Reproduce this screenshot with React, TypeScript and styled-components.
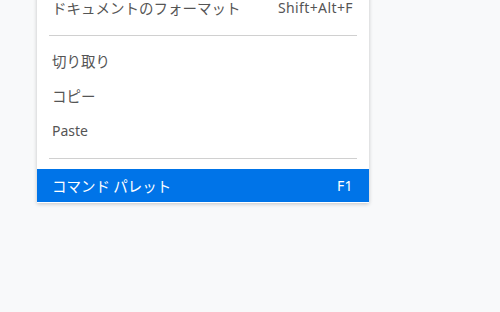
import React from 'react';
import styled, { createGlobalStyle } from 'styled-components';

const GlobalStyle = createGlobalStyle`
  html, body {
    margin: 0;
    padding: 0;
    background: #f8f9fa;
    overflow: hidden;
  }
  body {
    font-family: "Noto Sans", "Noto Sans CJK JP", sans-serif;
  }
`;

const Page = styled.div`
  width: 500px;
  height: 312px;
  padding-left: 37px;
  box-sizing: border-box;
`;

const Menu = styled.div`
  width: 332px;
  margin-top: -10px;
  background: #ffffff;
  padding-bottom: 1px;
  box-shadow: 0 1px 4px rgba(0, 0, 0, 0.22);
`;

const Item = styled.div<{ $active?: boolean; $h?: number }>`
  display: flex;
  align-items: center;
  justify-content: space-between;
  height: ${(p) => p.$h ?? 35}px;
  padding: 0 16px 0 15px;
  font-size: 14px;
  color: ${(p) => (p.$active ? '#ffffff' : '#555555')};
  background: ${(p) => (p.$active ? '#0074e8' : 'transparent')};
`;

const Label = styled.span<{ $jp?: boolean }>`
  font-family: ${(p) => (p.$jp ? '"Noto Sans CJK JP", sans-serif' : '"Noto Sans", sans-serif')};
  font-size: ${(p) => (p.$jp ? 14.5 : 14)}px;
`;

const Shortcut = styled.span`
  font-family: "Noto Sans", sans-serif;
  font-size: 14px;
  letter-spacing: 0.4px;
`;

const Separator = styled.div<{ $top?: number; $bottom?: number }>`
  height: 1px;
  margin: ${(p) => p.$top ?? 9}px 12px ${(p) => p.$bottom ?? 8}px 12px;
  background: #d0d0d0;
`;

const App: React.FC = () => {
  return (
    <Page>
      <GlobalStyle />
      <Menu>
        <Item>
          <Label $jp>ドキュメントのフォーマット</Label>
          <Shortcut>Shift+Alt+F</Shortcut>
        </Item>
        <Separator $top={10} $bottom={7} />
        <Item>
          <Label $jp>切り取り</Label>
        </Item>
        <Item>
          <Label $jp>コピー</Label>
        </Item>
        <Item>
          <Label>Paste</Label>
        </Item>
        <Separator $top={10} $bottom={10} />
        <Item $active $h={33}>
          <Label $jp>コマンド パレット</Label>
          <Shortcut>F1</Shortcut>
        </Item>
      </Menu>
    </Page>
  );
};

export default App;
